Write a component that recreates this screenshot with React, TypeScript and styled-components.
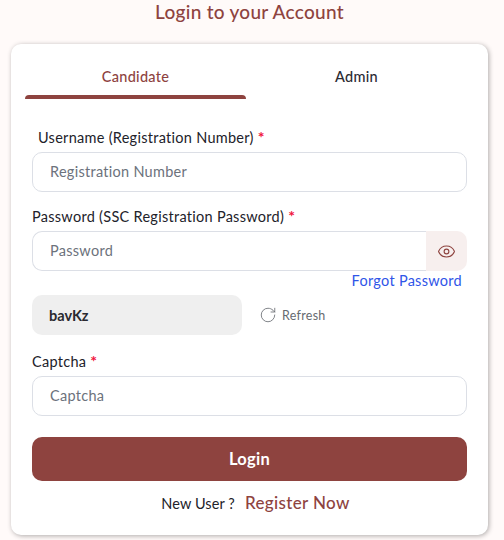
import React from 'react';
import styled, { createGlobalStyle } from 'styled-components';
import { Eye, RotateCw } from 'lucide-react';

const MAROON = '#8e433f';

const GlobalStyle = createGlobalStyle`
  html, body {
    margin: 0;
    padding: 0;
    background: #fffaf9;
    font-family: Lato, "Noto Sans", sans-serif;
    font-variant-ligatures: none;
    letter-spacing: 0.28px;
    overflow: hidden;
  }
  input, button {
    letter-spacing: inherit;
    font-variant-ligatures: inherit;
  }
  * { box-sizing: border-box; }
`;

const Page = styled.div`
  width: 504px;
  height: 540px;
  padding: 0 16px 0 11px;
`;

const Title = styled.h1`
  margin: 0;
  height: 44px;
  padding-top: 1px;
  text-align: center;
  font-size: 19px;
  line-height: 22px;
  font-weight: 500;
  color: ${MAROON};
`;

const Card = styled.div`
  height: 491px;
  background: #fff;
  border-radius: 10px;
  box-shadow: 1px 1px 5px rgba(0, 0, 0, 0.32);
  padding: 0 21px;
`;

const Tabs = styled.div`
  display: grid;
  grid-template-columns: 221px 221px;
  margin: 0 0 0 -7px;
  height: 55px;
`;

const Tab = styled.button<{ $active?: boolean }>`
  position: relative;
  border: 0;
  background: none;
  padding: 10px 0 0;
  height: 55px;
  font-family: inherit;
  font-size: 14.5px;
  line-height: 20px;
  font-weight: 500;
  text-align: center;
  color: ${(p) => (p.$active ? MAROON : '#2b2b33')};
  &::after {
    content: '';
    display: ${(p) => (p.$active ? 'block' : 'none')};
    position: absolute;
    left: 0;
    right: 0;
    bottom: 0;
    height: 4px;
    background: ${MAROON};
    border-radius: 4px 4px 0 0;
  }
`;

const Field = styled.div<{ $top: number }>`
  margin-top: ${(p) => p.$top}px;
`;

const Label = styled.label<{ $indent?: number }>`
  display: block;
  font-size: 14.5px;
  line-height: 20px;
  color: #22222a;
  margin-bottom: 4px;
  padding-left: ${(p) => p.$indent ?? 0}px;
`;

const Star = styled.span`
  color: #f0143c;
  font-size: 16px;
  font-weight: 700;
  line-height: 1;
`;

const Input = styled.input<{ $joined?: boolean }>`
  display: block;
  flex: 1;
  min-width: 0;
  width: 100%;
  height: 40px;
  padding: 0 17px 2px;
  border: 1px solid #dcdfe6;
  border-right-width: ${(p) => (p.$joined ? 0 : 1)}px;
  border-radius: ${(p) => (p.$joined ? '10px 0 0 10px' : '10px')};
  background: #fff;
  font-family: inherit;
  font-size: 14.5px;
  color: #22222a;
  outline: none;
  &::placeholder {
    color: #6c727c;
    opacity: 1;
  }
`;

const InputGroup = styled.div`
  display: flex;
`;

const EyeAddon = styled.span`
  display: flex;
  align-items: center;
  justify-content: center;
  width: 41px;
  height: 40px;
  background: #f7efee;
  border-radius: 0 10px 10px 0;
  color: ${MAROON};
`;

const ForgotRow = styled.div`
  display: flex;
  justify-content: flex-end;
  padding-right: 5px;
  height: 20px;
`;

const Forgot = styled.a`
  font-size: 14.5px;
  line-height: 20px;
  color: #2f55e8;
  text-decoration: none;
`;

const CaptchaRow = styled.div`
  display: flex;
  align-items: center;
  gap: 17px;
  margin-top: 4px;
`;

const CaptchaBox = styled.div`
  width: 210px;
  height: 40px;
  display: flex;
  align-items: center;
  padding-left: 17px;
  background: #efefef;
  border-radius: 10px;
  font-size: 14.5px;
  font-weight: 700;
  letter-spacing: 0;
  color: #2a2a30;
`;

const Refresh = styled.button`
  display: flex;
  align-items: center;
  gap: 5px;
  border: 0;
  background: none;
  padding: 0;
  font-family: inherit;
  font-size: 12.5px;
  color: #666a70;
`;

const LoginButton = styled.button`
  display: block;
  width: 100%;
  height: 44px;
  margin-top: 21px;
  border: 0;
  border-radius: 10px;
  padding: 0;
  background: ${MAROON};
  color: #fff;
  font-family: inherit;
  font-size: 16.5px;
  font-weight: 700;
`;

const Footer = styled.div`
  display: flex;
  justify-content: center;
  align-items: baseline;
  gap: 10px;
  margin-top: 11px;
  padding-left: 12px;
  font-size: 14.5px;
  line-height: 22px;
  letter-spacing: 0.1px;
  color: #22222a;
`;

const Register = styled.a`
  font-size: 17px;
  font-weight: 500;
  letter-spacing: 0.35px;
  color: ${MAROON};
  text-decoration: none;
`;

export default function App() {
  return (
    <Page>
      <GlobalStyle />
      <Title>Login to your Account</Title>
      <Card>
        <Tabs>
          <Tab $active>Candidate</Tab>
          <Tab>Admin</Tab>
        </Tabs>
        <Field $top={29}>
          <Label $indent={6}>
            Username (Registration Number) <Star>*</Star>
          </Label>
          <Input placeholder="Registration Number" />
        </Field>
        <Field $top={15}>
          <Label>
            Password (SSC Registration Password) <Star>*</Star>
          </Label>
          <InputGroup>
            <Input $joined placeholder="Password" />
            <EyeAddon>
              <Eye size={19} strokeWidth={1.4} />
            </EyeAddon>
          </InputGroup>
        </Field>
        <ForgotRow>
          <Forgot href="#">Forgot Password</Forgot>
        </ForgotRow>
        <CaptchaRow>
          <CaptchaBox>bavKz</CaptchaBox>
          <Refresh>
            <RotateCw size={18} strokeWidth={1.1} />
            Refresh
          </Refresh>
        </CaptchaRow>
        <Field $top={17}>
          <Label>
            Captcha <Star>*</Star>
          </Label>
          <Input placeholder="Captcha" />
        </Field>
        <LoginButton>Login</LoginButton>
        <Footer>
          <span>New User ?</span>
          <Register href="#">Register Now</Register>
        </Footer>
      </Card>
    </Page>
  );
}
